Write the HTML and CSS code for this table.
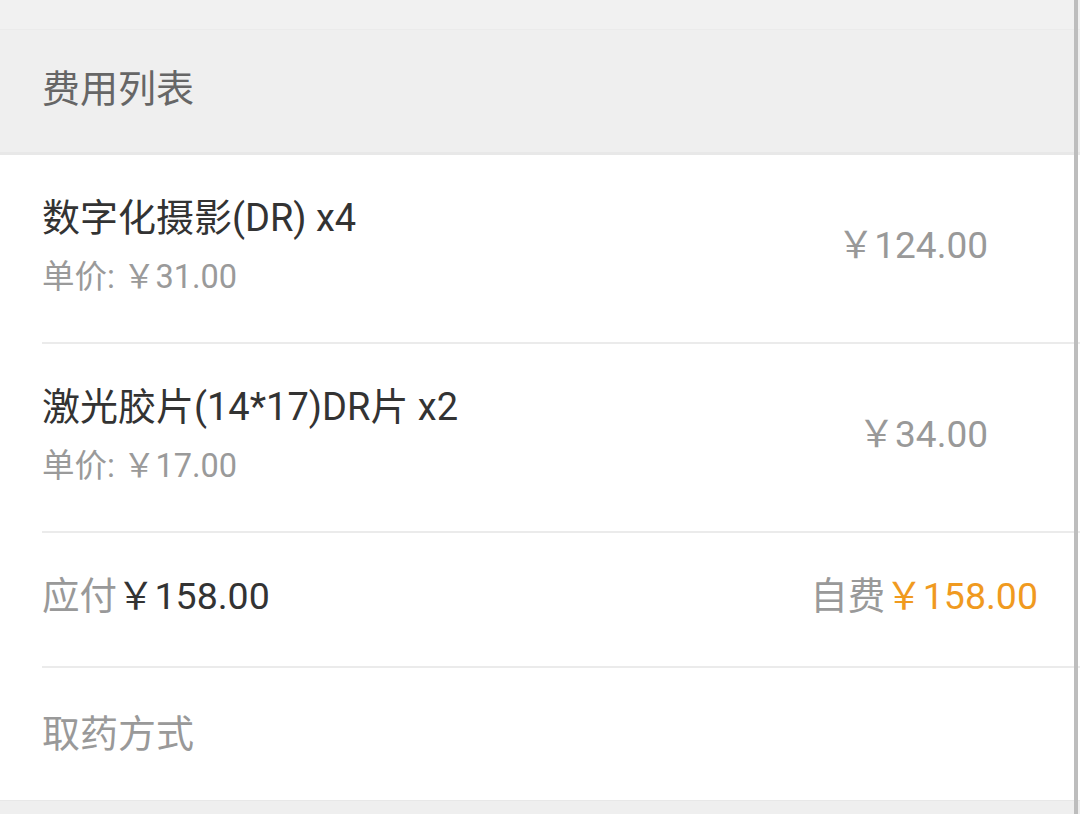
FILE: index.html
```html
<!DOCTYPE html>
<html lang="zh-CN">
<head>
<meta charset="utf-8">
<title>费用列表</title>
<link rel="stylesheet" href="styles.css">
</head>
<body>
<div class="page">
  <div class="top-gap"></div>
  <div class="section-header"><span class="header-text">费用列表</span></div>
  <div class="list">
    <div class="item">
      <div class="item-main">
        <div class="item-title">数字化摄影(DR) x4</div>
        <div class="item-sub">单价: ￥31.00</div>
      </div>
      <div class="item-price">￥124.00</div>
    </div>
    <div class="item">
      <div class="item-main">
        <div class="item-title">激光胶片(14*17)DR片 x2</div>
        <div class="item-sub">单价: ￥17.00</div>
      </div>
      <div class="item-price">￥34.00</div>
    </div>
    <div class="total">
      <div class="total-left"><span class="label">应付</span><span class="amount">￥158.00</span></div>
      <div class="total-right"><span class="label">自费</span><span class="amount-own">￥158.00</span></div>
    </div>
    <div class="pickup"><span class="pickup-text">取药方式</span></div>
  </div>
  <div class="bottom-gap"></div>
  <div class="scrollbar"></div>
</div>
</body>
</html>
```
FILE: styles.css
```css
html, body {
  margin: 0;
  padding: 0;
  background: #ffffff;
}
body {
  font-family: Roboto, "Noto Sans CJK SC", sans-serif;
  width: 1080px;
  height: 814px;
  overflow: hidden;
}
.page {
  position: relative;
  display: flex;
  flex-direction: column;
  height: 814px;
}
.top-gap {
  height: 29px;
  background: #f1f1f1;
  border-bottom: 1px solid #ebebeb;
}
.section-header {
  height: 122px;
  background: #efefef;
  border-bottom: 3px solid #e8e8e8;
  padding-left: 42px;
  display: flex;
  align-items: center;
  font-size: 38px;
  color: #666666;
}
.header-text {
  margin-top: -12px;
}
.list {
  display: flex;
  flex-direction: column;
  padding-left: 42px;
  background: #ffffff;
}
.item {
  height: 187px;
  border-bottom: 2px solid #ebebeb;
  display: flex;
  align-items: center;
  justify-content: space-between;
  padding-right: 92px;
}
.item-main {
  display: flex;
  flex-direction: column;
  gap: 18px;
  margin-top: -6px;
}
.item-title {
  font-size: 38px;
  line-height: 44px;
  color: #333333;
}
.item-sub {
  font-size: 32.5px;
  line-height: 38px;
  color: #9a9a9a;
}
.item-price {
  font-size: 37px;
  color: #999999;
  margin-top: -14px;
}
.total {
  height: 133px;
  border-bottom: 2px solid #ebebeb;
  display: flex;
  align-items: center;
  justify-content: space-between;
  padding-right: 42px;
}
.total-left, .total-right {
  display: flex;
  align-items: baseline;
  margin-top: -14px;
}
.label {
  font-size: 37.5px;
  color: #999999;
}
.amount {
  font-size: 37.5px;
  color: #333333;
}
.amount-own {
  font-size: 37.5px;
  color: #f09a1f;
}
.pickup {
  height: 132px;
  display: flex;
  align-items: center;
  font-size: 38px;
  color: #999999;
}
.pickup-text {
  margin-top: -8px;
}
.bottom-gap {
  flex: 1;
  background: #efefef;
  border-top: 1px solid #e8e8e8;
}
.scrollbar {
  position: absolute;
  top: 0;
  right: 2px;
  width: 4px;
  height: 814px;
  background: #bdbdbd;
}
```
